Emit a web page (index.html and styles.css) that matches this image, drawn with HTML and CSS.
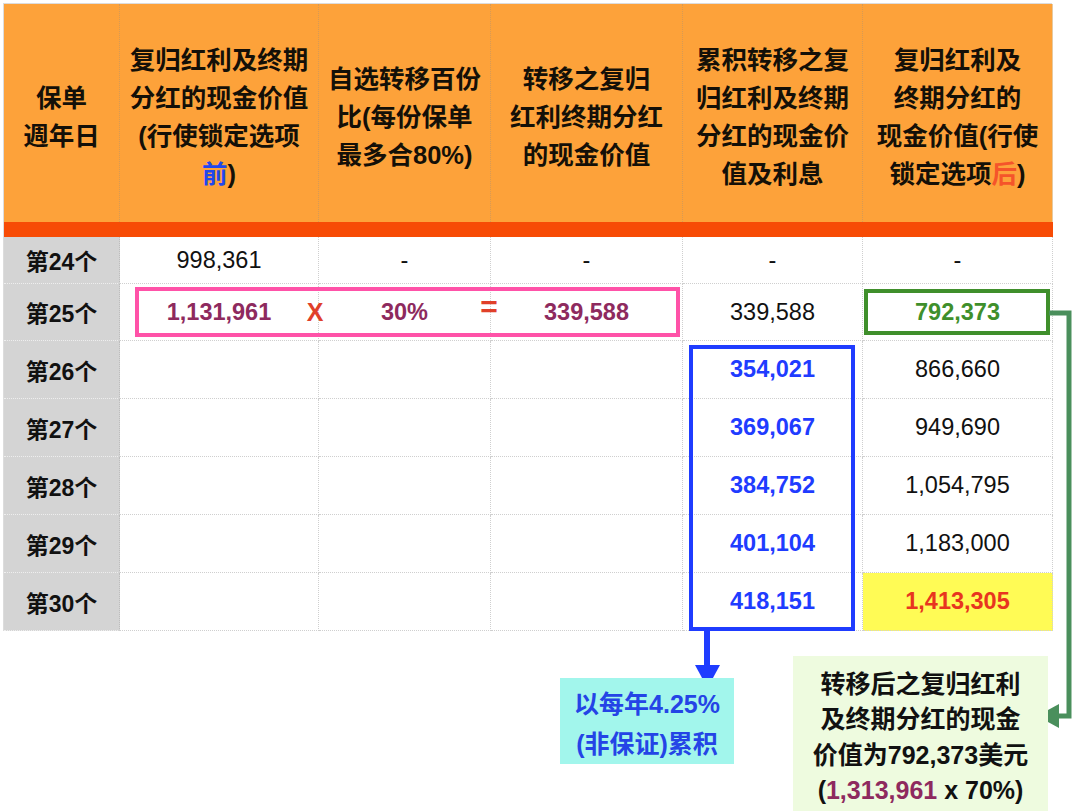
FILE: index.html
```html
<!DOCTYPE html>
<html lang="zh">
<head>
<meta charset="utf-8">
<title>复归红利锁定选项</title>
<link rel="stylesheet" href="styles.css">
</head>
<body>
<div class="page">
  <div class="sheet">
    <div class="cell head"><div class="t">保单<br>週年日</div></div>
    <div class="cell head"><div class="t">复归红利及终期<br>分红的现金价值<br>(行使锁定选项<br><span class="blue-t">前</span>)</div></div>
    <div class="cell head"><div class="t">自选转移百份<br>比(每份保单<br>最多合80%)</div></div>
    <div class="cell head"><div class="t">转移之复归<br>红利终期分红<br>的现金价值</div></div>
    <div class="cell head"><div class="t">累积转移之复<br>归红利及终期<br>分红的现金价<br>值及利息</div></div>
    <div class="cell head last"><div class="t">复归红利及<br>终期分红的<br>现金价值(行使<br>锁定选项<span class="red-t">后</span>)</div></div>
    <div class="stripe"></div>

    <div class="cell lab">第24个</div>
    <div class="cell">998,361</div>
    <div class="cell">-</div>
    <div class="cell">-</div>
    <div class="cell">-</div>
    <div class="cell last">-</div>

    <div class="cell lab">第25个</div>
    <div class="cell b purple">1,131,961</div>
    <div class="cell b purple">30%</div>
    <div class="cell b purple">339,588</div>
    <div class="cell">339,588</div>
    <div class="cell last b green">792,373</div>

    <div class="cell lab">第26个</div>
    <div class="cell"></div>
    <div class="cell"></div>
    <div class="cell"></div>
    <div class="cell b blue">354,021</div>
    <div class="cell last">866,660</div>

    <div class="cell lab">第27个</div>
    <div class="cell"></div>
    <div class="cell"></div>
    <div class="cell"></div>
    <div class="cell b blue">369,067</div>
    <div class="cell last">949,690</div>

    <div class="cell lab">第28个</div>
    <div class="cell"></div>
    <div class="cell"></div>
    <div class="cell"></div>
    <div class="cell b blue">384,752</div>
    <div class="cell last">1,054,795</div>

    <div class="cell lab">第29个</div>
    <div class="cell"></div>
    <div class="cell"></div>
    <div class="cell"></div>
    <div class="cell b blue">401,104</div>
    <div class="cell last">1,183,000</div>

    <div class="cell lab">第30个</div>
    <div class="cell"></div>
    <div class="cell"></div>
    <div class="cell"></div>
    <div class="cell b blue">418,151</div>
    <div class="cell last b red yellow">1,413,305</div>
  </div>

  <div class="box pink-box"></div>
  <div class="box green-box"></div>
  <div class="box blue-box"></div>
  <div class="op op-x">X</div>
  <div class="op op-eq">=</div>

  <svg class="arrows" width="1080" height="811" viewBox="0 0 1080 811">
    <line x1="707" y1="630" x2="707" y2="668" stroke="#1f3cff" stroke-width="6"/>
    <polygon points="695,665 720,665 707.5,688" fill="#1f3cff"/>
    <polyline points="1049,313 1069,313 1069,716 1056,716" fill="none" stroke="#4a8f5c" stroke-width="5"/>
    <polygon points="1037,716 1059,704 1059,728" fill="#4a8f5c"/>
  </svg>

  <div class="note cyan-note"><div class="t">以每年4.25%<br>(非保证)累积</div></div>
  <div class="note green-note"><div class="t">转移后之复归红利<br>及终期分红的现金<br>价值为792,373美元<br>(<span class="purple">1,313,961</span> x 70%)</div></div>
</div>
</body>
</html>
```

FILE: styles.css
```css
* { box-sizing: border-box; }
html, body { margin: 0; padding: 0; background: #ffffff; }
body {
  font-family: "Liberation Sans", "Noto Sans CJK SC", sans-serif;
  color: #111;
}
.page {
  position: relative;
  width: 1080px;
  height: 811px;
  overflow: hidden;
}
.sheet {
  margin: 3px 0 0 3px;
  display: grid;
  grid-template-columns: 116px 199px 172px 192px 180px 190px;
  grid-template-rows: 218px 15px 47px 57px repeat(5, 58px);
  width: 1049px;
  border-top: 1px solid #dcdcdc;
  border-left: 1px solid #dcdcdc;
}
.cell {
  display: flex;
  align-items: center;
  justify-content: center;
  text-align: center;
  font-size: 23.5px;
  border-right: 1px dotted #cfcfcf;
  border-bottom: 1px dotted #cfcfcf;
  background: #fff;
}
.t { white-space: nowrap; }
.head {
  background: #fda23a;
  font-weight: bold;
  font-size: 25.5px;
  line-height: 38px;
  color: #141008;
  border-bottom: none;
  border-right: 1px dotted #d69a55;
  padding: 8px 0 0 0;
}
.head.last { border-right: 1px solid #e6c9a0; }
.stripe {
  grid-column: 1 / -1;
  background: #f74b05;
}
.lab {
  background: #d4d4d4;
  font-weight: bold;
  font-size: 23px;
  border-right: 1px dotted #bdbdbd;
  border-bottom: 1px dotted #eeeeee;
}
.b { font-weight: bold; }
.purple { color: #8e2a5e; }
.green { color: #3f8f2b; }
.blue { color: #1f3cff; }
.red { color: #e8351f; }
.yellow { background: #fffb55; }
.blue-t { color: #2147ee; }
.red-t { color: #f5542a; }

.box {
  position: absolute;
  border-style: solid;
  border-width: 4px;
}
.pink-box {
  left: 135px; top: 287px; width: 545px; height: 50px;
  border-color: #ff52a8;
}
.green-box {
  left: 864px; top: 289px; width: 186px; height: 46px;
  border-color: #3f8f2b;
}
.blue-box {
  left: 689px; top: 345px; width: 166px; height: 286px;
  border-color: #1f3cff;
}
.op {
  position: absolute;
  font-weight: bold;
  color: #e0402a;
  font-size: 25px;
  line-height: 30px;
  width: 30px;
  text-align: center;
}
.op-x { left: 300px; top: 297px; }
.op-eq { left: 474px; top: 292px; font-size: 30px; }

.arrows {
  position: absolute;
  left: 0; top: 0;
}
.note {
  position: absolute;
  display: flex;
  align-items: center;
  justify-content: center;
  text-align: center;
  font-weight: bold;
  font-size: 25px;
}
.cyan-note {
  left: 560px; top: 678px; width: 174px; height: 86px;
  background: #a2f6ec;
  color: #2444e6;
  line-height: 40px;
  padding-top: 5px;
}
.green-note {
  left: 793px; top: 656px; width: 255px; height: 155px;
  background: #eefbdf;
  color: #111;
  line-height: 35.5px;
  padding-top: 8px;
}
```
